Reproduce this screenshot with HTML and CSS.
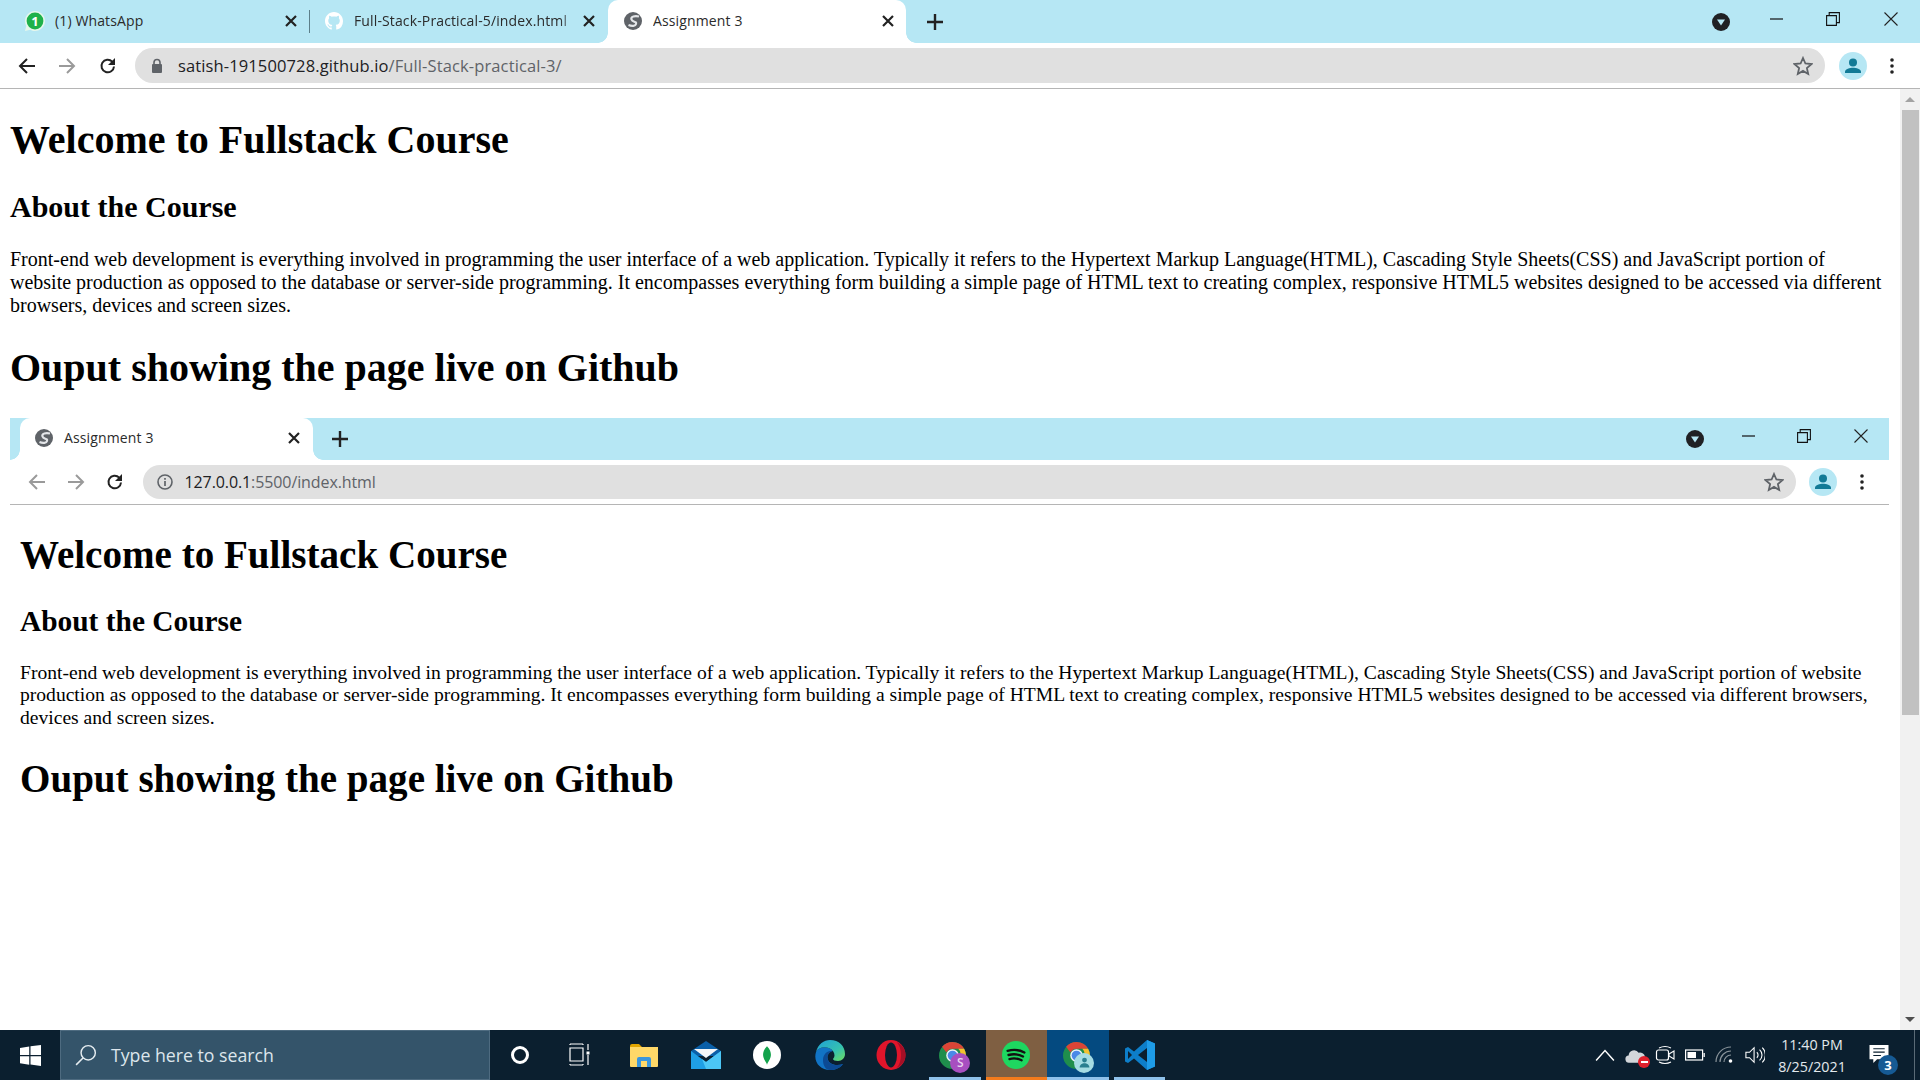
FILE: index.html
```html
<!DOCTYPE html>
<html lang="en">
<head>
<meta charset="utf-8">
<title>Assignment 3</title>
<link rel="stylesheet" href="styles.css">
</head>
<body>
<svg class="sprite" width="0" height="0" aria-hidden="true">
  <symbol id="globe" viewBox="0 0 18 18"><circle cx="9" cy="9" r="9" fill="#5f6368"/><path d="M15 4.500C11 3.500 6.500 4.500 7.500 7.500 8.500 10.500 13 9 12 12 11.500 14 8 14.500 4.500 13" stroke="#e4e6e9" stroke-width="2.200" fill="none"/></symbol>
  <symbol id="x" viewBox="0 0 18 18"><path d="M4 4l10 10M14 4L4 14" stroke="#222" stroke-width="2.2" fill="none"/></symbol>
  <symbol id="plus" viewBox="0 0 18 18"><path d="M9 1v16M1 9h16" stroke="#222" stroke-width="2.4" fill="none"/></symbol>
  <symbol id="down" viewBox="0 0 18 18"><circle cx="9" cy="9" r="9" fill="#202124"/><path d="M5 6.500h8L9 12.500z" fill="#b6e7f4"/></symbol>
  <symbol id="min" viewBox="0 0 14 14"><path d="M0 7h13" stroke="#111" stroke-width="1.2" fill="none"/></symbol>
  <symbol id="restore" viewBox="0 0 14 14"><path d="M.6 3.600h9.800v9.800H.6zM3.200 3.400V.6h10.200v10h-3" stroke="#111" stroke-width="1.100" fill="none"/></symbol>
  <symbol id="close" viewBox="0 0 14 14"><path d="M.5.5l13 13M13.500.5L.5 13.500" stroke="#222" stroke-width="1.100" fill="none"/></symbol>
  <symbol id="arrow" viewBox="0 0 18 18"><path d="M17 9H2M9 2L2 9l7 7" stroke="currentColor" stroke-width="2" fill="none"/></symbol>
  <symbol id="reload" viewBox="0 0 18 18"><path d="M15 9.500A6.300 6.300 0 1 1 13.200 4.600" stroke="currentColor" stroke-width="2" fill="none"/><path d="M16 1v7h-7z" fill="currentColor"/></symbol>
  <symbol id="lock" viewBox="0 0 12 16"><rect x="1" y="6" width="10" height="9" rx="1" fill="#5f6368"/><path d="M3 6V4.500a3 3 0 0 1 6 0V6" stroke="#5f6368" stroke-width="1.600" fill="none"/></symbol>
  <symbol id="info" viewBox="0 0 16 16"><circle cx="8" cy="8" r="7" stroke="#5f6368" stroke-width="1.600" fill="none"/><path d="M8 7v5M8 4v1.800" stroke="#5f6368" stroke-width="1.700"/></symbol>
  <symbol id="star" viewBox="0 0 20 20"><path d="M10 2l2.400 5.500 6 .6-4.500 4 1.300 5.900-5.200-3.100L4.800 18l1.300-5.900-4.500-4 6-.6z" stroke="#5f6368" stroke-width="1.800" fill="none"/></symbol>
  <symbol id="avatar" viewBox="0 0 28 28"><circle cx="14" cy="14" r="14" fill="#b6e7f4"/><circle cx="14" cy="10.500" r="4" fill="#127a96"/><path d="M6 21v-1.500c0-2.500 5-3.800 8-3.800s8 1.300 8 3.800V21z" fill="#127a96"/></symbol>
  <symbol id="dots" viewBox="0 0 6 18"><circle cx="3" cy="3" r="1.800" fill="#222"/><circle cx="3" cy="9" r="1.800" fill="#222"/><circle cx="3" cy="15" r="1.800" fill="#222"/></symbol>
  <symbol id="chrome" viewBox="0 0 28 28"><circle cx="14" cy="14" r="14" fill="#1f8e4c"/><path d="M14 0a14 14 0 0 1 12.100 7H14a7 7 0 0 0-6.300 4L3.200 5A14 14 0 0 1 14 0z" fill="#dc4437"/><path d="M26.100 7A14 14 0 0 1 14 28l6-10.500A7 7 0 0 0 20 7z" fill="#f4c030"/><circle cx="14" cy="14" r="6.500" fill="#eef2f6"/><circle cx="14" cy="14" r="5" fill="#4a89e8"/></symbol>
</svg>

<div class="screen">
  <header class="chrome outer">
    <div class="strip">
      <div class="tab tab-first">
        <svg class="fav-wa" viewBox="0 0 20 20"><path d="M10 0C4.500 0 0 4.500 0 10c0 1.800.5 3.500 1.300 5L0 20l5.200-1.300C6.600 19.500 8.200 20 10 20c5.500 0 10-4.500 10-10S15.500 0 10 0z" fill="#e6f7ec"/><circle cx="10" cy="10" r="8.400" fill="#1fb14a"/><text x="10" y="14.700" class="wa-num">1</text></svg>
        <span class="tab-title">(1) WhatsApp</span>
        <svg class="tab-x"><use href="#x"/></svg>
      </div>
      <div class="tab tab-second">
        <svg class="favicon" viewBox="0 0 16 16"><path fill="#fff" d="M8 0C3.580 0 0 3.580 0 8c0 3.540 2.290 6.530 5.470 7.630.4.070.55-.17.55-.38 0-.19-.01-.82-.01-1.490-2.010.37-2.530-.49-2.690-.94-.09-.23-.48-.94-.82-1.130-.28-.15-.68-.52-.01-.53.63-.01 1.080.58 1.230.82.72 1.210 1.870.87 2.330.66.070-.52.28-.87.51-1.070-1.780-.2-3.640-.89-3.640-3.950 0-.87.31-1.590.82-2.150-.08-.2-.36-1.020.08-2.120 0 0 .67-.21 2.200.82.64-.18 1.320-.27 2-.27.68 0 1.360.09 2 .27 1.530-1.040 2.200-.82 2.200-.82.44 1.100.16 1.920.08 2.120.51.56.82 1.270.82 2.150 0 3.070-1.870 3.750-3.650 3.950.29.25.54.73.54 1.480 0 1.070-.01 1.930-.01 2.200 0 .21.15.46.55.38A8.013 8.013 0 0016 8c0-4.420-3.580-8-8-8z"/></svg>
        <span class="tab-title tab-fade">Full-Stack-Practical-5/index.html</span>
        <svg class="tab-x"><use href="#x"/></svg>
      </div>
      <div class="tab tab-active">
        <svg class="favicon"><use href="#globe"/></svg>
        <span class="tab-title">Assignment 3</span>
        <svg class="tab-x"><use href="#x"/></svg>
      </div>
      <svg class="new-tab"><use href="#plus"/></svg>
      <div class="strip-space"></div>
      <div class="wc"><svg class="wc-down"><use href="#down"/></svg></div>
      <div class="wc wc-2"><svg class="wc-ico"><use href="#min"/></svg></div>
      <div class="wc"><svg class="wc-ico"><use href="#restore"/></svg></div>
      <div class="wc wc-4"><svg class="wc-ico"><use href="#close"/></svg></div>
    </div>
    <div class="toolbar">
      <div class="nav dark"><svg class="nav-ico"><use href="#arrow"/></svg></div>
      <div class="nav dim"><svg class="nav-ico flip"><use href="#arrow"/></svg></div>
      <div class="nav dark nav-reload"><svg class="nav-ico"><use href="#reload"/></svg></div>
      <div class="omni">
        <svg class="omni-lock"><use href="#lock"/></svg>
        <div class="url"><span class="url-host">satish-191500728.github.io</span>/Full-Stack-practical-3/</div>
        <svg class="omni-star"><use href="#star"/></svg>
      </div>
      <div class="profile"><svg class="avatar"><use href="#avatar"/></svg></div>
      <div class="more"><svg class="dots"><use href="#dots"/></svg></div>
    </div>
  </header>

  <div class="viewport">
    <main class="page">
      <h1>Welcome to Fullstack Course</h1>
      <h2>About the Course</h2>
      <p>Front-end web development is everything involved in programming the user interface of a web application. Typically it refers to the Hypertext Markup Language(HTML), Cascading Style Sheets(CSS) and JavaScript portion of website production as opposed to the database or server-side programming. It encompasses everything form building a simple page of HTML text to creating complex, responsive HTML5 websites designed to be accessed via different browsers, devices and screen sizes.</p>
      <h1 class="h-output">Ouput showing the page live on Github</h1>

      <section class="shot">
        <header class="chrome inner">
          <div class="strip">
            <div class="tab tab-active">
              <svg class="favicon"><use href="#globe"/></svg>
              <span class="tab-title">Assignment 3</span>
              <svg class="tab-x"><use href="#x"/></svg>
            </div>
            <svg class="new-tab"><use href="#plus"/></svg>
            <div class="strip-space"></div>
            <div class="wc"><svg class="wc-down"><use href="#down"/></svg></div>
            <div class="wc wc-2"><svg class="wc-ico"><use href="#min"/></svg></div>
            <div class="wc wc-3"><svg class="wc-ico"><use href="#restore"/></svg></div>
            <div class="wc wc-4"><svg class="wc-ico"><use href="#close"/></svg></div>
          </div>
          <div class="toolbar">
            <div class="nav dim"><svg class="nav-ico"><use href="#arrow"/></svg></div>
            <div class="nav dim"><svg class="nav-ico flip"><use href="#arrow"/></svg></div>
            <div class="nav dark"><svg class="nav-ico"><use href="#reload"/></svg></div>
            <div class="omni">
              <svg class="omni-info"><use href="#info"/></svg>
              <div class="url"><span class="url-host">127.0.0.1</span>:5500/index.html</div>
              <svg class="omni-star"><use href="#star"/></svg>
            </div>
            <div class="profile"><svg class="avatar"><use href="#avatar"/></svg></div>
            <div class="more"><svg class="dots"><use href="#dots"/></svg></div>
          </div>
        </header>
        <div class="shot-page">
          <h1>Welcome to Fullstack Course</h1>
          <h2>About the Course</h2>
          <p>Front-end web development is everything involved in programming the user interface of a web application. Typically it refers to the Hypertext Markup Language(HTML), Cascading Style Sheets(CSS) and JavaScript portion of website production as opposed to the database or server-side programming. It encompasses everything form building a simple page of HTML text to creating complex, responsive HTML5 websites designed to be accessed via different browsers, devices and screen sizes.</p>
          <h1 class="h-output">Ouput showing the page live on Github</h1>
        </div>
      </section>
    </main>
    <aside class="scrollbar">
      <div class="sb-up"></div>
      <div class="sb-thumb"></div>
      <div class="sb-rest"></div>
      <div class="sb-down"></div>
    </aside>
  </div>

  <footer class="taskbar">
    <div class="start">
      <svg class="win" viewBox="0 0 20 20"><path d="M0 2.800l8.800-1.300v8H0zM10 1.300L20 0v9.500H10zM0 10.700h8.800v8L0 17.400zM10 10.700h10V20l-10-1.400z" fill="#fff"/></svg>
    </div>
    <div class="search">
      <svg class="search-ico" viewBox="0 0 20 20"><circle cx="12" cy="8" r="6.500" stroke="#e6edf1" stroke-width="1.300" fill="none"/><path d="M7.500 12.500L1 19" stroke="#e6edf1" stroke-width="1.400"/></svg>
      <span class="search-text">Type here to search</span>
    </div>
    <div class="cortana"><span class="ring"></span></div>
    <div class="taskview">
      <svg class="tv-ico" viewBox="0 0 24 24"><path d="M1 1h13M1 5h13v13H1zM1 22h13M1 22v-1M14 22v-1M1 1v1M14 1v1M19 1v6M19 12v10" stroke="#fff" stroke-width="1.200" fill="none"/><rect x="17.500" y="8.500" width="3" height="3" fill="#fff"/></svg>
    </div>
    <div class="slot shift-3">
      <svg class="app-folder" viewBox="0 0 28 23"><path d="M0 2a2 2 0 0 1 2-2h7l3 3h16v6H0z" fill="#e2a500"/><path d="M0 3h28v19a1 1 0 0 1-1 1H1a1 1 0 0 1-1-1z" fill="#ffd868"/><path d="M7 23v-8a2 2 0 0 1 2-2h10a2 2 0 0 1 2 2v8h-4v-6h-6v6z" fill="#3b96dc"/></svg>
    </div>
    <div class="slot shift-3">
      <svg class="app-mail" viewBox="0 0 30 28"><path d="M15 0l15 10v5H0v-5z" fill="#0a5fa8"/><path d="M3 8h24l-12 9z" fill="#f4f6f8"/><path d="M0 10l15 11 15-11v18H0z" fill="#1f9fe6"/><path d="M30 10v18H15l-4-10 4 3z" fill="#4cc6f6"/></svg>
    </div>
    <div class="slot shift-3">
      <svg class="app-round" viewBox="0 0 27 27"><circle cx="13.500" cy="13.500" r="13.500" fill="#fff"/><path d="M13.500 5c3 3 3.800 6 3.800 8.500S15.500 19 14 21.500L13.500 23l-.5-1.500C11.500 19 9.700 16 9.700 13.500S10.500 8 13.500 5z" fill="#12a24b"/></svg>
    </div>
    <div class="slot shift-2">
      <svg class="app" viewBox="0 0 30 30"><defs><linearGradient id="eg" x1="0" y1="0" x2="1" y2="1"><stop offset="0" stop-color="#1f9fd8"/><stop offset=".6" stop-color="#35c1b0"/><stop offset="1" stop-color="#6fdc5e"/></linearGradient></defs><path d="M1 12C-2 22 5 30 15 30c5 0 10-2 13-6-6 2-13 1-15-4-2-5 2-9 5-9C14 6 4 6 1 12z" fill="#1173c5"/><path d="M8 20c0-6 5-10 10-9-4 1-7 5-5 9 2 5 9 6 15 4-3 4-8 6-13 6-4 0-7-4-7-10z" fill="#0c4a94"/><path d="M1 12C3 4 9 0 15 0c9 0 15 6 15 14 0 4-3 7-7 7-3 0-5-1-5-2 2-2 2-5 0-8C14 6 4 6 1 12z" fill="url(#eg)"/></svg>
    </div>
    <div class="slot shift-2">
      <svg class="app" viewBox="0 0 29 30"><ellipse cx="14.500" cy="15" rx="14.500" ry="15" fill="#e0152b"/><ellipse cx="14.500" cy="15" rx="6" ry="12.500" fill="#0b1f2f"/><path d="M20 2c5 2 9 7 9 13s-4 11-9 13c3-3 4.500-8 4.500-13S23 5 20 2z" fill="#a40f26"/></svg>
    </div>
    <div class="slot slot-run shift-2">
      <span class="stack"><svg class="app-chrome"><use href="#chrome"/></svg><span class="badge badge-s">S</span></span>
    </div>
    <div class="slot slot-orange">
      <svg class="app-round" viewBox="0 0 30 30"><circle cx="15" cy="15" r="15" fill="#1ed760"/><path d="M6 10.500c6-1.500 13-1 18 1.800M7 15c5-1.300 11-.8 15.500 1.600M8 19.300c4-1 9-.7 13 1.300" stroke="#111" stroke-width="2.500" stroke-linecap="round" fill="none"/></svg>
    </div>
    <div class="slot slot-blue shift-1">
      <span class="stack"><svg class="app-chrome"><use href="#chrome"/></svg><span class="badge badge-p"><svg class="badge-user" viewBox="0 0 16 16"><circle cx="8" cy="5" r="3" fill="#2a7f90"/><path d="M2 14c0-3 3-5 6-5s6 2 6 5z" fill="#2a7f90"/></svg></span></span>
    </div>
    <div class="slot slot-run">
      <svg class="app" viewBox="0 0 30 30"><path d="M22 0l8 3.500v23L22 30 9 18.500l-6 4.500-3-1.500v-13L3 7l6 4.500z" fill="#0d7ec9"/><path d="M22 0l8 3.500v23L22 30z" fill="#1e9ce8"/><path d="M22 8l-9 7 9 7z" fill="#0b1f2f"/><path d="M3 11l4 4-4 4z" fill="#0b1f2f"/></svg>
    </div>
    <div class="task-space"></div>
    <div class="tray">
      <div class="tray-item"><svg class="t-ico" viewBox="0 0 18 12"><path d="M1 11l8-9 8 9" stroke="#fff" stroke-width="1.300" fill="none"/></svg></div>
      <div class="tray-item"><span class="stack"><svg class="t-cloud" viewBox="0 0 22 18"><path d="M5 17a4 4 0 0 1-1-8 6 6 0 0 1 11-3 5 5 0 0 1 3 11z" fill="#d2d6da"/></svg><span class="badge-red"></span></span></div>
      <div class="tray-item"><svg class="t-ico" viewBox="0 0 20 20"><path d="M4 3c4-2 8-2 12 0M4 17c4 2 8 2 12 0" stroke="#fff" stroke-width="1.100" fill="none"/><rect x="1.500" y="5" width="12" height="10" rx="2" stroke="#fff" stroke-width="1.200" fill="none"/><path d="M14 9l5-3v8l-5-3z" stroke="#fff" stroke-width="1.100" fill="none"/></svg></div>
      <div class="tray-item"><svg class="t-ico" viewBox="0 0 20 12"><rect x=".6" y="1" width="17" height="10" stroke="#fff" stroke-width="1.200" fill="none"/><rect x="2.500" y="3" width="8.500" height="6" fill="#fff"/><rect x="18.500" y="4" width="1.300" height="4" fill="#fff"/></svg></div>
      <div class="tray-item"><svg class="t-ico" viewBox="0 0 20 20"><path d="M1 17A15 15 0 0 1 16 2M5 17A11 11 0 0 1 16 6M9 17A7 7 0 0 1 16 10" stroke="#8a949b" stroke-width="1.200" fill="none"/><circle cx="15.500" cy="16" r="1.800" fill="#fff"/></svg></div>
      <div class="tray-item"><svg class="t-ico" viewBox="0 0 22 20"><path d="M1 7h4l5-5v16l-5-5H1z" stroke="#fff" stroke-width="1.200" fill="none"/><path d="M13 7a4 4 0 0 1 0 6M16 4a8 8 0 0 1 0 12M19 2a11 11 0 0 1 0 16" stroke="#fff" stroke-width="1.200" fill="none"/></svg></div>
    </div>
    <div class="clock"><span>11:40 PM</span><span>8/25/2021</span></div>
    <div class="notify">
      <svg class="note" viewBox="0 0 20 20"><path d="M0 0h20v15H8l-4 4v-4H0z" fill="#fff"/><path d="M4 4h12M4 7.500h12M4 11h8" stroke="#0b1f2f" stroke-width="1.100"/></svg>
      <span class="note-count">3</span>
    </div>
    <div class="peek"></div>
  </footer>
</div>
</body>
</html>
```

FILE: styles.css
```css
* { box-sizing: border-box; }
html, body { margin: 0; padding: 0; height: 100%; overflow: hidden; background: #fff; }
.sprite { display: block; position: absolute; }
.screen { width: 1920px; height: 1080px; display: flex; flex-direction: column; overflow: hidden; }
svg { display: block; flex: none; }

/* Browser chrome */
.chrome { font-family: "Open Sans", "Noto Sans", sans-serif; color: #333; flex: none; }
.strip { display: flex; align-items: stretch; background: #b6e7f4; height: 43px; }
.tab { position: relative; display: flex; align-items: center; height: 100%; font-size: 14px; color: #2b2b2b; padding-right: 9px; padding-bottom: 1px; }
.tab-first { width: 309px; padding-left: 26px; }
.tab-second { width: 299px; padding-left: 16px; padding-right: 10px; }
.tab-second::before { content: ""; position: absolute; left: 0; top: 10px; bottom: 10px; width: 1px; background: #5c7f89; }
.tab-active { width: 298px; padding-left: 16px; background: #fff; border-radius: 10px 10px 0 0; }
.tab-active::before, .tab-active::after { content: ""; position: absolute; bottom: 0; width: 10px; height: 10px; }
.tab-active::before { left: -10px; background: radial-gradient(circle at 0 0, #b6e7f4 9.500px, #fff 10px); }
.tab-active::after { right: -10px; background: radial-gradient(circle at 100% 0, #b6e7f4 9.500px, #fff 10px); }
.favicon { width: 18px; height: 18px; }
.fav-wa { width: 20px; height: 20px; margin: 0 -1px; }
.tab-title { flex: 1; margin-left: 11px; margin-bottom: 2px; white-space: nowrap; overflow: hidden; min-width: 0; letter-spacing: .13px; }
.tab-fade { -webkit-mask-image: linear-gradient(90deg, #000 92%, transparent 100%); mask-image: linear-gradient(90deg, #000 92%, transparent 100%); margin-right: 2px; }
.tab-x { width: 18px; height: 18px; }
.wa-num { font-family: "Open Sans", sans-serif; font-size: 13px; font-weight: 700; fill: #fff; text-anchor: middle; }
.new-tab { width: 18px; height: 18px; margin: 13px 0 0 20px; }
.strip-space { flex: 1; }
.wc { width: 56px; display: flex; justify-content: center; padding-top: 12px; }
.wc-ico { width: 14px; height: 14px; }
.wc-down { width: 18px; height: 18px; margin-top: 1px; }
.wc-4 { margin-left: 2px; }
.wc-2 { margin-left: 0; }
.outer .strip { padding-right: 1px; }

.toolbar { display: flex; align-items: center; height: 46px; background: #fff; border-bottom: 1px solid #b5b5b5; }
.outer .toolbar { padding-left: 7px; }
.nav { width: 40px; display: flex; justify-content: center; }
.nav-reload { margin-left: 1px; }
.dark { color: #222; }
.dim { color: #9a9a9a; }
.nav-ico { width: 18px; height: 18px; }
.flip { transform: scaleX(-1); }
.omni { flex: 1; height: 35px; margin-left: 7px; background: #e0e0e0; border-radius: 18px; display: flex; align-items: center; }
.omni-lock { width: 12px; height: 16px; margin-left: 16px; }
.omni-info { width: 16px; height: 16px; margin-left: 14px; }
.url { flex: 1; margin-left: 15px; font-size: 16.500px; color: #5f6368; white-space: nowrap; letter-spacing: .12px; }
.url-host { color: #202124; }
.omni-star { width: 20px; height: 20px; margin-right: 12px; }
.profile { width: 40px; margin-left: 8px; display: flex; justify-content: center; }
.avatar { width: 28px; height: 28px; }
.more { width: 38px; margin-right: 9px; display: flex; justify-content: center; }
.dots { width: 6px; height: 18px; }

/* Viewport */
.viewport { flex: 1; min-height: 0; display: flex; }
.page { flex: 1; min-width: 0; padding-left: 10px; padding-right: 10px; font-family: "Liberation Serif", serif; color: #000; overflow: hidden; }
.scrollbar { width: 20px; flex: none; background: #f1f1f1; display: flex; flex-direction: column; align-items: center; }
.sb-up, .sb-down { flex: none; width: 0; height: 0; border-left: 5px solid transparent; border-right: 5px solid transparent; }
.sb-up { margin-top: 8px; border-bottom: 5px solid #a3a3a3; }
.sb-thumb { width: 17px; height: 605px; margin-top: 8px; background: #c1c1c1; flex: none; }
.sb-rest { flex: 1; }
.sb-down { margin-bottom: 8px; border-top: 5px solid #505050; }

h1, h2, p { margin: 0; }
.page > h1 { font-size: 40px; line-height: 46px; margin-top: 28px; }
.page > h2 { font-size: 30px; line-height: 34px; margin-top: 27px; }
.page > p { font-size: 20px; line-height: 23px; margin-top: 24px; }
.page > .h-output { margin-top: 28px; }

.shot { margin-top: 26.500px; width: 1879px; }
.inner .strip { height: 42px; }
.inner .tab-active { width: 293px; margin-left: 10px; padding-left: 15px; padding-right: 10px; }
.inner .new-tab { margin-left: 18px; margin-top: 12px; }
.inner .wc-2 { margin-left: -2px; }
.inner .wc-3 { margin-left: -1px; }
.inner .wc-4 { margin-left: 1px; }
.inner .wc { padding-top: 11px; }
.inner .toolbar { padding-left: 7px; height: 45px; }
.inner .nav { width: 39px; }
.inner .omni { margin-left: 9px; height: 34px; }
.inner .url { margin-left: 11.500px; font-size: 16px; letter-spacing: -.1px; }
.inner .omni-star { margin-right: 12px; }
.inner .profile { margin-left: 7px; }
.inner .more { margin-right: 8px; }
.shot-page { padding: 0 8px 0 10px; }
.shot-page h1 { font-size: 39.100px; line-height: 45px; margin-top: 27.500px; }
.shot-page h2 { font-size: 29.400px; line-height: 34px; margin-top: 27px; }
.shot-page p { font-size: 19.580px; line-height: 22.600px; margin-top: 23.500px; }
.shot-page .h-output { margin-top: 27px; }

/* Taskbar */
.taskbar { flex: none; height: 50px; background: #0b1f2f; display: flex; align-items: stretch; font-family: "Open Sans", "Noto Sans", sans-serif; color: #e6edf1; }
.start { width: 60px; display: flex; align-items: center; justify-content: center; }
.win { width: 21px; height: 21px; }
.search { width: 430px; background: #34546a; border: 1px solid #4e6b80; display: flex; align-items: center; padding-left: 14px; }
.search-ico { width: 22px; height: 22px; }
.search-text { margin-left: 14px; font-size: 17.700px; color: #dde6ec; }
.cortana { width: 60px; display: flex; align-items: center; justify-content: center; }
.ring { width: 18px; height: 18px; border: 3px solid #fff; border-radius: 50%; }
.taskview { width: 66px; padding-right: 5px; display: flex; align-items: center; justify-content: center; }
.tv-ico { width: 24px; height: 24px; }
.slot { width: 61.600px; display: flex; align-items: center; justify-content: center; position: relative; }
.shift-3 { padding-right: 5px; }
.shift-2 { padding-right: 4px; }
.shift-1 { padding-right: 2px; }
.app { width: 30px; height: 30px; }
.app-folder { width: 28px; height: 23px; }
.app-mail { width: 30px; height: 28px; }
.app-round { width: 28px; height: 28px; }
.app-chrome { width: 27px; height: 27px; }
.slot-run { box-shadow: inset 5px 0 #0b1f2f, inset -5px 0 #0b1f2f, inset 0 -3px #8fc1ea; }
.slot-orange { background: #7f5f42; box-shadow: inset 0 -3px #f47b1c; }
.slot-blue { background: #044a80; box-shadow: inset 0 -3px #8fc1ea; }
.stack { position: relative; display: block; }
.badge { position: absolute; right: -4px; bottom: -4px; width: 20px; height: 20px; border-radius: 50%; display: flex; align-items: center; justify-content: center; font-size: 12px; font-weight: 600; }
.badge-s { background: #a84fc0; color: #e8d5ee; }
.badge-p { background: #a5dce3; }
.badge-user { width: 13px; height: 13px; }
.task-space { flex: 1; }
.tray { display: flex; }
.tray-item { width: 30px; display: flex; align-items: center; justify-content: center; }
.t-ico { width: 20px; height: 20px; }
.t-cloud { width: 20px; height: 17px; }
.badge-red { position: absolute; right: -5px; bottom: -4px; width: 12px; height: 12px; border-radius: 50%; background: #e0202c; }
.badge-red::after { content: ""; position: absolute; left: 2.500px; top: 5px; width: 7px; height: 2px; background: #fff; }
.clock { width: 84px; display: flex; flex-direction: column; align-items: center; justify-content: center; gap: 3px; font-size: 14.300px; line-height: 19px; color: #e3e9ed; }
.notify { width: 38px; margin-left: 10px; position: relative; display: flex; align-items: center; padding-left: 5px; }
.note { width: 20px; height: 19px; margin-bottom: 1px; }
.note-count { position: absolute; left: 14px; top: 25px; width: 20px; height: 20px; border-radius: 50%; background: #165a94; color: #fff; font-size: 13px; font-weight: 700; line-height: 20px; text-align: center; }
.peek { width: 6px; margin-left: 12px; border-left: 1px solid #5a6a76; }
```
